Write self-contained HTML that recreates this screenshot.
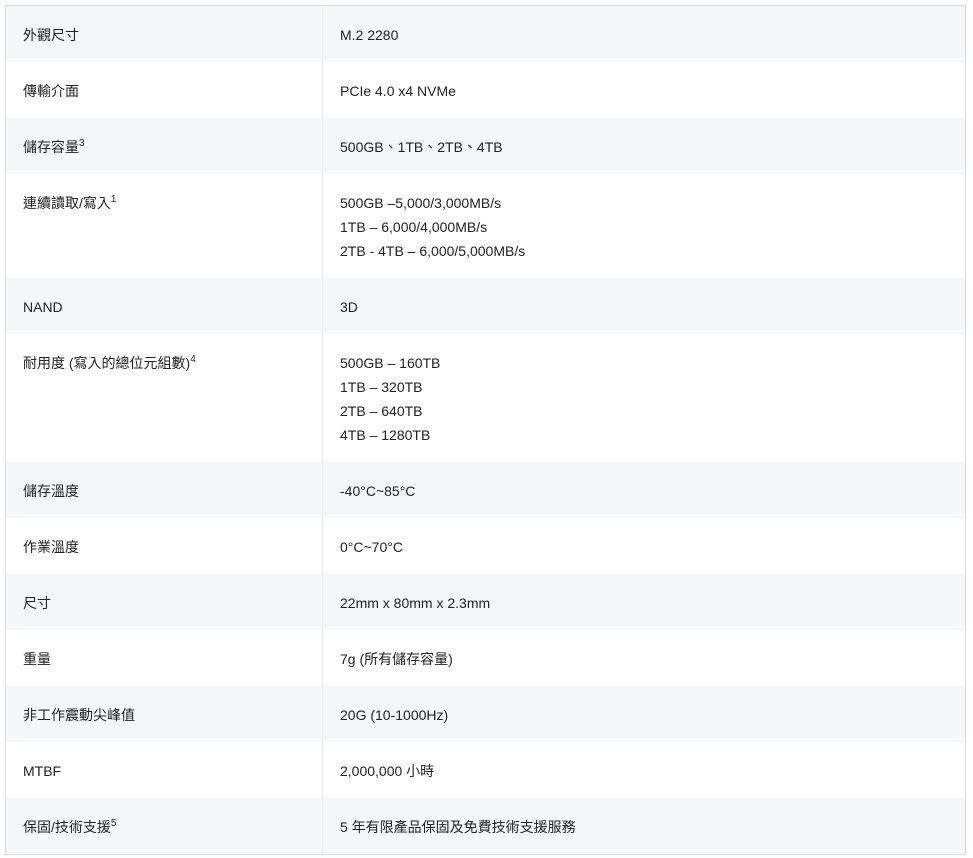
<!DOCTYPE html>
<html><head><meta charset="utf-8"><style>
html,body{margin:0;padding:0;background:#fff;width:973px;height:858px;overflow:hidden}
table{position:absolute;left:5px;top:5px;width:961px;border-collapse:collapse;border:1px solid #dcdcdc;font-family:"Liberation Sans","Noto Sans CJK TC",sans-serif;font-size:14px;color:#222}
td{vertical-align:top;padding:17px 16px 15px 16px;line-height:24px}
td:first-child{width:283px;padding-left:17px;border-right:1px solid #eceef0}
td:last-child{padding-left:17px}
tr:nth-child(odd){background:#f5f7f9}
tr:nth-child(even){background:#fff}
sup{font-size:10px;line-height:0;vertical-align:6px}
</style></head><body>
<table>
<tr><td>外觀尺寸</td><td>M.2 2280</td></tr>
<tr><td>傳輸介面</td><td>PCIe 4.0 x4 NVMe</td></tr>
<tr><td>儲存容量<sup>3</sup></td><td>500GB、1TB、2TB、4TB</td></tr>
<tr><td>連續讀取/寫入<sup>1</sup></td><td>500GB –5,000/3,000MB/s<br>1TB – 6,000/4,000MB/s<br>2TB - 4TB – 6,000/5,000MB/s</td></tr>
<tr><td>NAND</td><td>3D</td></tr>
<tr><td>耐用度 (寫入的總位元組數)<sup>4</sup></td><td>500GB – 160TB<br>1TB – 320TB<br>2TB – 640TB<br>4TB – 1280TB</td></tr>
<tr><td>儲存溫度</td><td>-40°C~85°C</td></tr>
<tr><td>作業溫度</td><td>0°C~70°C</td></tr>
<tr><td>尺寸</td><td>22mm x 80mm x 2.3mm</td></tr>
<tr><td>重量</td><td>7g (所有儲存容量)</td></tr>
<tr><td>非工作震動尖峰值</td><td>20G (10-1000Hz)</td></tr>
<tr><td>MTBF</td><td>2,000,000 小時</td></tr>
<tr><td>保固/技術支援<sup>5</sup></td><td>5 年有限產品保固及免費技術支援服務</td></tr>
</table>
</body></html>
